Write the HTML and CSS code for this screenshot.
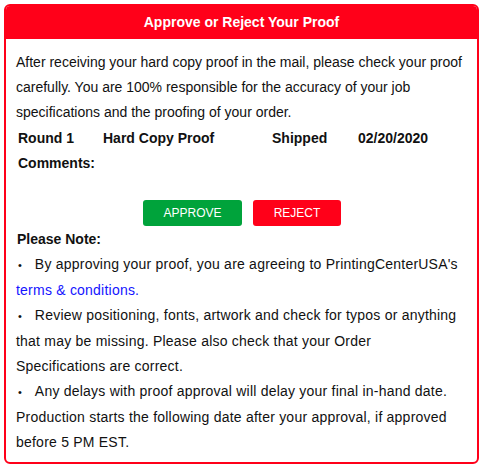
FILE: index.html
```html
<!DOCTYPE html>
<html>
<head>
<meta charset="utf-8">
<link rel="stylesheet" href="styles.css">
</head>
<body>
<div class="panel">
  <div class="head">Approve or Reject Your Proof</div>
  <div class="body">
    <p class="intro">After receiving your hard copy proof in the mail, please check your proof carefully. You are 100% responsible for the accuracy of your job specifications and the proofing of your order.</p>
    <div class="info">
      <span class="cell">Round 1</span>
      <span class="cell">Hard Copy Proof</span>
      <span class="cell">Shipped</span>
      <span class="cell">02/20/2020</span>
    </div>
    <div class="comments">Comments:</div>
    <div class="actions">
      <button class="btn approve">APPROVE</button>
      <button class="btn reject">REJECT</button>
    </div>
    <div class="note-title">Please Note:</div>
    <p class="note">By approving your proof, you are agreeing to PrintingCenterUSA's <a class="link" href="#">terms &amp; conditions.</a></p>
    <p class="note">Review positioning, fonts, artwork and check for typos or anything that may be missing. Please also check that your Order Specifications are correct.</p>
    <p class="note">Any delays with proof approval will delay your final in-hand date. Production starts the following date after your approval, if approved before 5 PM EST.</p>
  </div>
</div>
</body>
</html>
```

FILE: styles.css
```css
* { box-sizing: border-box; }
html, body { margin: 0; padding: 0; background: #fff; }
body {
  font-family: "Liberation Sans", Arial, sans-serif;
  font-size: 14px;
  color: #111;
}
.panel {
  margin: 4px;
  width: 475px;
  height: 460px;
  border: 2px solid #ff0019;
  border-radius: 6px;
  overflow: hidden;
}
.head {
  background: #ff0019;
  color: #fff;
  font-weight: bold;
  font-size: 14px;
  text-align: center;
  height: 33px;
  line-height: 33px;
}
.body {
  padding: 11px 10px 0 10px;
}
p { margin: 0; line-height: 25px; }
.note { letter-spacing: 0.22px; padding-right: 5px; }
.note::before {
  content: "•";
  font-size: 11px;
  margin: 0 13px 0 2px;
  letter-spacing: 0;
}
.info {
  display: grid;
  grid-template-columns: 85px 169px 86px auto;
  font-weight: bold;
  line-height: 25px;
  margin-top: 1px;
}
.cell { padding-left: 2px; }
.comments {
  font-weight: bold;
  line-height: 25px;
  padding-left: 2px;
}
.actions {
  display: flex;
  justify-content: center;
  gap: 11px;
  margin-top: 24px;
  margin-bottom: 1px;
  padding-left: 1px;
}
.btn {
  font-family: "Liberation Sans", Arial, sans-serif;
  font-size: 12px;
  color: #fff;
  border: none;
  border-radius: 3px;
  height: 26px;
  padding: 0;
  cursor: pointer;
}
.approve { background: #00a33b; width: 99px; }
.reject { background: #ff0019; width: 88px; }
.note-title {
  font-weight: bold;
  line-height: 25px;
  padding-left: 1px;
}
.link { color: #1414ff; text-decoration: none; }
```
